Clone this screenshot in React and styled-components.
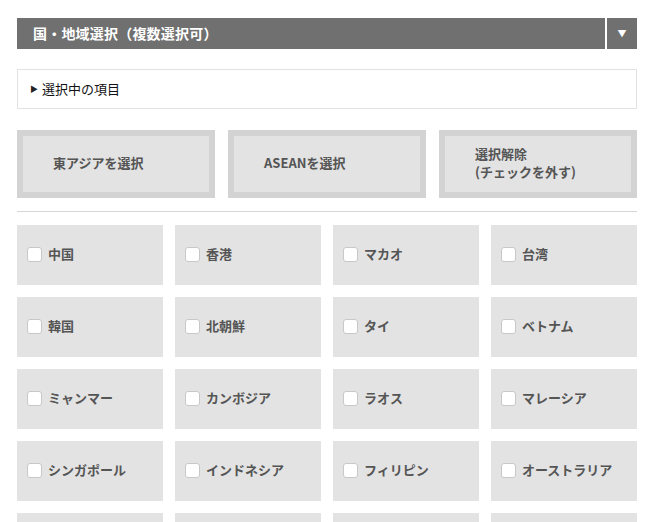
import React from "react";
import styled, { createGlobalStyle } from "styled-components";

const Global = createGlobalStyle`
  html, body { margin: 0; padding: 0; background: #fff; }
  body { font-family: "Noto Sans CJK JP", "Noto Sans", sans-serif; }
`;

const Page = styled.div`
  width: 620px;
  padding: 18px 13px 0 17px;
`;

const Header = styled.div`
  display: flex;
  height: 31px;
  background: #707070;
  color: #fff;
`;

const HeaderTitle = styled.div`
  flex: 1;
  display: flex;
  align-items: center;
  padding-left: 16px;
  padding-bottom: 2px;
  font-size: 14px;
  font-weight: bold;
  letter-spacing: 0.2px;
`;

const HeaderToggle = styled.div`
  width: 30px;
  border-left: 2px solid #fff;
  display: flex;
  align-items: center;
  justify-content: center;
  font-size: 9px;
  line-height: 1;
`;

const Selected = styled.div`
  margin-top: 20px;
  height: 38px;
  border: 1px solid #e2e2e2;
  display: flex;
  align-items: center;
  padding-left: 12px;
  padding-bottom: 1px;
  box-sizing: border-box;
  height: 40px;
  font-size: 13px;
  color: #111;
  gap: 4px;
`;

const Caret = styled.span`
  font-size: 8px;
  color: #222;
`;

const ButtonRow = styled.div`
  margin-top: 21px;
  display: grid;
  grid-template-columns: repeat(3, 198px);
  gap: 13px;
`;

const ActionButton = styled.div`
  height: 56px;
  border: 6px solid #d3d3d3;
  background: #e3e3e3;
  display: flex;
  align-items: center;
  padding-left: 30px;
  padding-bottom: 2px;
  box-sizing: content-box;
  height: 54px;
  font-size: 13px;
  font-weight: bold;
  color: #555;
  line-height: 18px;
`;

const Rule = styled.div`
  margin-top: 13px;
  height: 1px;
  background: #d6d6d6;
`;

const Grid = styled.div`
  margin-top: 13px;
  display: grid;
  grid-template-columns: repeat(4, 146px);
  grid-auto-rows: 60px;
  gap: 12px;
`;

const Cell = styled.label`
  background: #e3e3e3;
  display: flex;
  align-items: center;
  padding-left: 10px;
  padding-bottom: 3px;
  gap: 6px;
  font-size: 13px;
  font-weight: bold;
  color: #555;
`;

const Box = styled.span`
  width: 13px;
  height: 13px;
  margin-top: 2px;
  border: 1px solid #c8c8c8;
  border-radius: 3px;
  background: #fff;
  flex: none;
`;

const countries = [
  "中国", "香港", "マカオ", "台湾",
  "韓国", "北朝鮮", "タイ", "ベトナム",
  "ミャンマー", "カンボジア", "ラオス", "マレーシア",
  "シンガポール", "インドネシア", "フィリピン", "オーストラリア",
  "ニュージーランド", "インド", "パキスタン", "バングラデシュ",
];

export default function App() {
  return (
    <>
      <Global />
      <Page>
        <Header>
          <HeaderTitle>国・地域選択（複数選択可）</HeaderTitle>
          <HeaderToggle>▼</HeaderToggle>
        </Header>
        <Selected>
          <Caret>▶</Caret>
          <span>選択中の項目</span>
        </Selected>
        <ButtonRow>
          <ActionButton>東アジアを選択</ActionButton>
          <ActionButton>ASEANを選択</ActionButton>
          <ActionButton>
            選択解除
            <br />
            (チェックを外す)
          </ActionButton>
        </ButtonRow>
        <Rule />
        <Grid>
          {countries.map((c) => (
            <Cell key={c}>
              <Box />
              {c}
            </Cell>
          ))}
        </Grid>
      </Page>
    </>
  );
}
